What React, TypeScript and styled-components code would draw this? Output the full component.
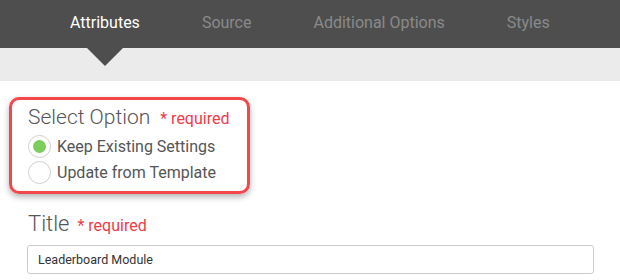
import React from 'react';
import styled, {createGlobalStyle} from 'styled-components';

const tabs = ['Attributes', 'Source', 'Additional Options', 'Styles'];

const options = [
  {label: 'Keep Existing Settings', checked: true},
  {label: 'Update from Template', checked: false},
];

const App = () => {
  return (
    <>
      <GlobalStyle />
      <Nav>
        {tabs.map((t, i) => (
          <Tab key={t} active={i === 0}>
            {t}
          </Tab>
        ))}
      </Nav>
      <Band />
      <Content>
        <Highlight>
          <Heading>
            Select Option <Required>* required</Required>
          </Heading>
          {options.map((o) => (
            <RadioRow key={o.label}>
              <Radio checked={o.checked} />
              <span>{o.label}</span>
            </RadioRow>
          ))}
        </Highlight>
        <Field>
          <Heading big>
            Title <Required>* required</Required>
          </Heading>
          <Input defaultValue="Leaderboard Module" />
        </Field>
      </Content>
    </>
  );
};

const GlobalStyle = createGlobalStyle`
  body {
    margin: 0;
    background: #fff;
    font-family: Roboto, "Liberation Sans", sans-serif;
    overflow: hidden;
  }
`;

const Nav = styled.div`
  height: 48px;
  background: #4e4e4e;
  display: flex;
  padding-left: 39px;
`;

const Tab = styled.div<{active?: boolean}>`
  position: relative;
  padding: 0 31px 4px;
  display: flex;
  align-items: center;
  font-size: 16px;
  color: ${(p) => (p.active ? '#fff' : '#8a8a8a')};
  &::after {
    content: '';
    display: ${(p) => (p.active ? 'block' : 'none')};
    position: absolute;
    top: 100%;
    left: 50%;
    margin-left: -18px;
    border-left: 18px solid transparent;
    border-right: 18px solid transparent;
    border-top: 18px solid #4e4e4e;
  }
`;

const Band = styled.div`
  height: 33px;
  background: #ebebeb;
`;

const Content = styled.div`
  padding: 16px 28px 0 9px;
`;

const Highlight = styled.div`
  box-sizing: border-box;
  width: 241px;
  height: 97px;
  border: 3px solid #f4474c;
  border-radius: 10px;
  box-shadow: 0 3px 6px rgba(0, 0, 0, 0.3);
  padding: 3px 0 0 16px;
`;

const Heading = styled.div<{big?: boolean}>`
  font-size: ${(p) => (p.big ? '22px' : '21px')};
  font-weight: 300;
  color: #555;
  line-height: 28px;
  display: flex;
  align-items: baseline;
  gap: ${(p) => (p.big ? '8px' : '10px')};
`;

const Required = styled.span`
  font-size: 16px;
  font-weight: 400;
  color: #ee3b4a;
`;

const RadioRow = styled.div`
  display: flex;
  align-items: center;
  gap: 6px;
  height: 26px;
  font-size: 16px;
  color: #555;
`;

const Radio = styled.span<{checked?: boolean}>`
  width: 23px;
  height: 23px;
  border: 1px solid #cfcfcf;
  border-radius: 50%;
  box-sizing: border-box;
  display: flex;
  align-items: center;
  justify-content: center;
  &::before {
    content: '';
    display: ${(p) => (p.checked ? 'block' : 'none')};
    width: 13px;
    height: 13px;
    border-radius: 50%;
    background: #7ccd5c;
  }
`;

const Field = styled.div`
  margin-top: 16px;
  padding-left: 19px;
  display: flex;
  flex-direction: column;
  gap: 5px;
`;

const Input = styled.input`
  width: 567px;
  height: 29px;
  box-sizing: border-box;
  margin-left: -1px;
  border: 1px solid #cbcbcb;
  border-radius: 3px;
  padding: 0 10px;
  font-family: Roboto, "Liberation Sans", sans-serif;
  font-size: 12.5px;
  color: #333;
  outline: none;
`;

export default App;
